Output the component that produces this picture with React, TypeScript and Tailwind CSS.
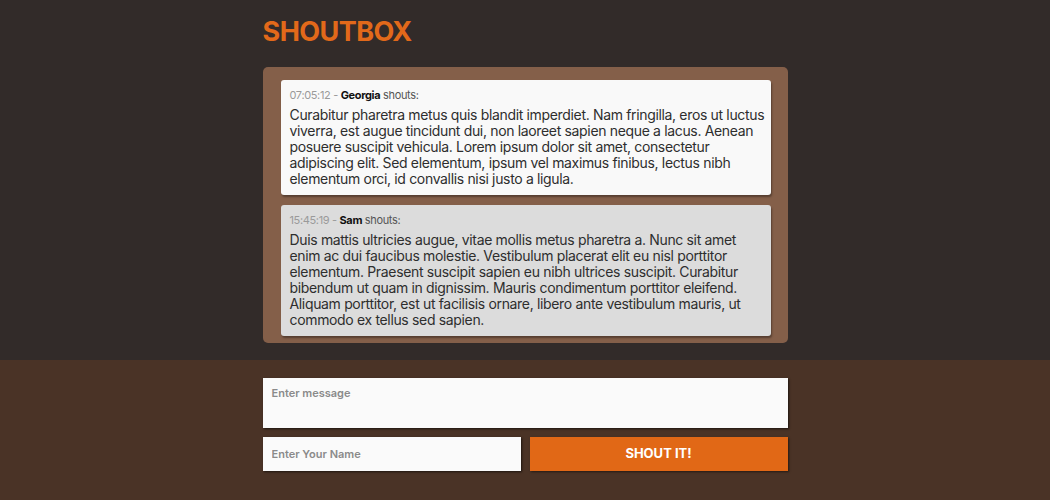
type Shout = {
  time: string;
  name: string;
  text: string;
  alt?: boolean;
};

const shouts: Shout[] = [
  {
    time: "07:05:12",
    name: "Georgia",
    text: "Curabitur pharetra metus quis blandit imperdiet. Nam fringilla, eros ut luctus viverra, est augue tincidunt dui, non laoreet sapien neque a lacus. Aenean posuere suscipit vehicula. Lorem ipsum dolor sit amet, consectetur adipiscing elit. Sed elementum, ipsum vel maximus finibus, lectus nibh elementum orci, id convallis nisi justo a ligula.",
  },
  {
    time: "15:45:19",
    name: "Sam",
    text: "Duis mattis ultricies augue, vitae mollis metus pharetra a. Nunc sit amet enim ac dui faucibus molestie. Vestibulum placerat elit eu nisl porttitor elementum. Praesent suscipit sapien eu nibh ultrices suscipit. Curabitur bibendum ut quam in dignissim. Mauris condimentum porttitor eleifend. Aliquam porttitor, est ut facilisis ornare, libero ante vestibulum mauris, ut commodo ex tellus sed sapien.",
    alt: true,
  },
];

function ShoutCard({ shout }: { shout: Shout }) {
  return (
    <div
      className={`rounded-[3px] pl-[9px] pr-[2px] pt-[8px] pb-[8px] shadow-[1px_2px_2px_rgba(0,0,0,0.35)] ${
        shout.alt ? "bg-[#dcdcdc]" : "bg-[#f9f9f9]"
      }`}
    >
      <p className="text-[11px] leading-[14px] tracking-[-0.35px] text-[#9a9a9a]">
        {shout.time} - <span className="font-bold text-[#111]">{shout.name}</span>{" "}
        <span className="text-[#555]">shouts:</span>
      </p>
      <p className="mt-[5px] text-[14px] leading-[16px] tracking-[-0.34px] text-[#2e2e2e]">{shout.text}</p>
    </div>
  );
}

export default function App() {
  return (
    <div className="w-[1050px] h-[500px] flex flex-col font-['Inter',sans-serif]">
      {/* ── Haut : titre + liste ───────────────────────── */}
      <section className="bg-[#322b29] h-[360px]">
        <div className="w-[525px] mx-auto pt-[15px]">
          <h1 className="text-[27px] leading-[34px] font-bold tracking-[-0.55px] text-[#e2691a]">SHOUTBOX</h1>
          <div className="mt-[18px] bg-[#845f49] rounded-[5px] pl-[18px] pr-[17px] pt-[13px] pb-[7px] flex flex-col gap-[10px]">
            {shouts.map((s, i) => (
              <ShoutCard key={i} shout={s} />
            ))}
          </div>
        </div>
      </section>

      {/* ── Bas : formulaire ───────────────────────────── */}
      <section className="bg-[#4a3326] flex-1">
        <div className="w-[525px] mx-auto pt-[18px] flex flex-col gap-[9px]">
          <textarea
            placeholder="Enter message"
            className="h-[50px] w-full resize-none bg-[#fafafa] px-[9px] py-[8px] text-[11px] leading-[14px] font-semibold text-[#333] placeholder:text-[#8a8a8a] outline-none shadow-[1px_1px_2px_rgba(0,0,0,0.6)]"
          />
          <div className="flex gap-[9px]">
            <input
              placeholder="Enter Your Name"
              className="h-[34px] w-[258px] bg-[#fafafa] px-[9px] text-[11px] font-semibold text-[#333] placeholder:text-[#8a8a8a] outline-none shadow-[1px_1px_2px_rgba(0,0,0,0.6)]"
            />
            <button className="h-[34px] flex-1 bg-[#e16816] text-white text-[13px] font-bold shadow-[1px_1px_2px_rgba(0,0,0,0.5)]">
              SHOUT IT!
            </button>
          </div>
        </div>
      </section>
    </div>
  );
}
